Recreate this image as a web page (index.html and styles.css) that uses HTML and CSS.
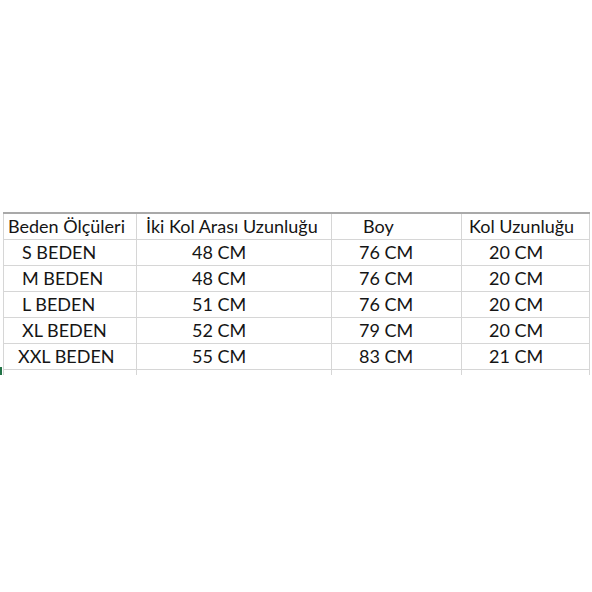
FILE: index.html
```html
<!DOCTYPE html>
<html lang="tr">
<head>
<meta charset="utf-8">
<link rel="stylesheet" href="styles.css">
</head>
<body>
<div class="sheet">
  <table class="grid">
    <colgroup>
      <col class="c1"><col class="c2"><col class="c3"><col class="c4">
    </colgroup>
    <tr class="head">
      <td class="p1h">Beden Ölçüleri</td>
      <td class="p2h">İki Kol Arası Uzunluğu</td>
      <td class="p3h">Boy</td>
      <td class="p4h">Kol Uzunluğu</td>
    </tr>
    <tr><td class="p1">S BEDEN</td><td class="p2">48 CM</td><td class="p3">76 CM</td><td class="p4">20 CM</td></tr>
    <tr><td class="p1">M BEDEN</td><td class="p2">48 CM</td><td class="p3">76 CM</td><td class="p4">20 CM</td></tr>
    <tr><td class="p1">L BEDEN</td><td class="p2">51 CM</td><td class="p3">76 CM</td><td class="p4">20 CM</td></tr>
    <tr><td class="p1">XL BEDEN</td><td class="p2">52 CM</td><td class="p3">79 CM</td><td class="p4">20 CM</td></tr>
    <tr><td class="p1x">XXL BEDEN</td><td class="p2">55 CM</td><td class="p3">83 CM</td><td class="p4">21 CM</td></tr>
    <tr class="stub"><td></td><td></td><td></td><td></td></tr>
  </table>
  <div class="handle"></div>
</div>
</body>
</html>
```
FILE: styles.css
```css
html, body {
  margin: 0;
  padding: 0;
  background: #ffffff;
}
body {
  width: 592px;
  height: 592px;
  overflow: hidden;
}
.sheet {
  position: relative;
  padding-top: 212px;
  padding-left: 3px;
}
.grid {
  border-collapse: collapse;
  table-layout: fixed;
  width: 586px;
  font-family: Lato, "Open Sans", sans-serif;
  font-size: 18px;
  color: #151515;
}
.c1 { width: 133px; }
.c2 { width: 195px; }
.c3 { width: 130px; }
.c4 { width: 128px; }
.grid td {
  height: 25px;
  padding: 0;
  border: 1px solid #d6d6d6;
  white-space: nowrap;
  overflow: hidden;
  vertical-align: middle;
  line-height: 25px;
}
.grid tr.head td {
  border-top: 2px solid #a9a9a9;
}
.p1h { padding-left: 4px !important; }
.p2h { padding-left: 9px !important; }
.p3h { padding-left: 31px !important; }
.p4h { padding-left: 7px !important; }
.p1 { padding-left: 18px !important; }
.p1x { padding-left: 14px !important; }
.p2 { padding-left: 55px !important; }
.p3 { padding-left: 27px !important; }
.p4 { padding-left: 27px !important; }
.grid tr.stub td {
  height: 5px;
  line-height: 5px;
  border-bottom: none;
}
.handle {
  position: absolute;
  left: 0;
  top: 367px;
  width: 2px;
  height: 8px;
  background: #217346;
}
```
